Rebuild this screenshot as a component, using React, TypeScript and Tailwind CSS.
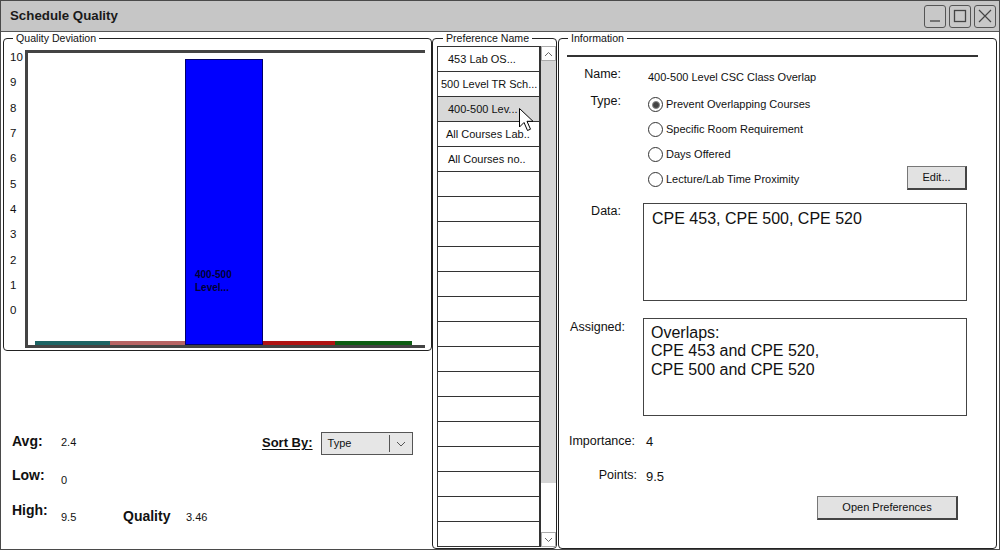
import React from "react";

const prefRows: { text: string; pad: string; selected?: boolean }[] = [
  { text: "453 Lab OS...", pad: "pl-[10px]" },
  { text: "500 Level TR Sch...", pad: "pl-[3px]" },
  { text: "400-500 Lev...", pad: "pl-[10px]", selected: true },
  { text: "All Courses Lab..", pad: "pl-[8px]" },
  { text: "All Courses no..", pad: "pl-[10px]" },
];

const yLabels = ["10", "9", "8", "7", "6", "5", "4", "3", "2", "1", "0"];

function Radio({ checked, label }: { checked?: boolean; label: string }) {
  return (
    <div className="flex h-[25px] items-center">
      <div className="flex h-[15px] w-[15px] items-center justify-center rounded-full border border-[#333] bg-white">
        {checked && <div className="h-[8px] w-[8px] rounded-full border border-[#888] bg-[#444]" />}
      </div>
      <span className="ml-[3px] text-[11px] leading-[13px] text-[#111]">{label}</span>
    </div>
  );
}

function WinButton({ children }: { children: React.ReactNode }) {
  return (
    <div className="flex h-[23px] w-[22px] items-center justify-center rounded-[3px] border border-[#555] bg-[#c8c8c8]">
      {children}
    </div>
  );
}

export default function App() {
  return (
    <div className="box-border flex h-[550px] w-[1000px] flex-col overflow-hidden border border-[#4a4a4a] bg-white font-['Liberation_Sans',Arial,sans-serif] text-[#111]">
      {/* Title bar */}
      <div className="flex h-[31px] shrink-0 items-center border-b border-[#555] bg-[#c6c6c6] pl-[9px] pr-[3px]">
        <span className="text-[13.3px] font-bold leading-[16px] text-[#1a1a1a]">Schedule Quality</span>
        <div className="ml-auto flex gap-[3px]">
          <WinButton>
            <svg width="14" height="14" viewBox="0 0 14 14">
              <line x1="2" y1="12" x2="12" y2="12" stroke="#444" strokeWidth="1.3" />
            </svg>
          </WinButton>
          <WinButton>
            <svg width="14" height="14" viewBox="0 0 14 14">
              <rect x="1.5" y="1.5" width="11" height="11" fill="none" stroke="#444" strokeWidth="1.3" />
            </svg>
          </WinButton>
          <WinButton>
            <svg width="16" height="16" viewBox="0 0 16 16">
              <path d="M2 2 L14 14 M14 2 L2 14" stroke="#444" strokeWidth="1.2" />
            </svg>
          </WinButton>
        </div>
      </div>

      {/* Body */}
      <div className="flex min-h-0 flex-1">
        {/* Left column */}
        <div className="ml-[2px] flex w-[429px] flex-col">
          <fieldset className="m-0 h-[319px] rounded-[4px] border border-[#222] p-0">
            <legend className="ml-[9px] px-[3px] text-[10.6px] leading-[13px] text-[#111]">Quality Deviation</legend>
            <div className="flex">
              <div className="flex w-[21px] flex-col pl-[6px]">
                {yLabels.map((l) => (
                  <div key={l} className="flex h-[25.3px] items-center text-[11.5px] leading-[13px] text-[#111]">
                    {l}
                  </div>
                ))}
              </div>
              <div className="mt-[5px] h-[298px] w-[400px] border-b-[3px] border-l-[3px] border-t-[3px] border-[#444]">
                <div className="flex h-full items-end pl-[7px]">
                  <div className="h-[4px] w-[75px] bg-[#1d6464]" />
                  <div className="h-[4px] w-[75px] bg-[#b86464]" />
                  <div className="h-[286px] w-[78px] border border-[#00006a] bg-[#0000ff] pl-[9px] pt-[208px]">
                    <div className="text-[10px] font-bold leading-[13px] text-[#000033]">
                      400-500
                      <br />
                      Level...
                    </div>
                  </div>
                  <div className="h-[4px] w-[72px] bg-[#b01414]" />
                  <div className="h-[4px] w-[77px] bg-[#0e5e14]" />
                </div>
              </div>
            </div>
          </fieldset>

          {/* Stats */}
          <div className="flex flex-col pl-[9px] pt-[81px]">
            <div className="flex h-[23px] items-start">
              <div className="flex w-[250px] items-start">
                <span className="mt-[1px] w-[49px] text-[14px] font-bold leading-[16px]">Avg:</span>
                <span className="mt-[4px] text-[11px] leading-[13px]">2.4</span>
              </div>
              <span className="mt-[3px] text-[13px] font-bold leading-[16px] underline underline-offset-[2px]">Sort By:</span>
              <div className="ml-[8px] flex h-[23px] w-[92px] items-center border border-[#555] bg-[#e6e6e6]">
                <span className="pl-[6px] text-[11px] leading-[13px]">Type</span>
                <div className="ml-auto h-[17px] w-px bg-[#555]" />
                <div className="flex w-[22px] items-center justify-center">
                  <svg width="10" height="6" viewBox="0 0 10 6">
                    <path d="M1 1 L5 5 L9 1" fill="none" stroke="#555" strokeWidth="1" />
                  </svg>
                </div>
              </div>
            </div>
            <div className="mt-[11px] flex items-start">
              <span className="mt-[1px] w-[49px] text-[14px] font-bold leading-[16px]">Low:</span>
              <span className="mt-[8px] text-[11px] leading-[13px]">0</span>
            </div>
            <div className="mt-[14px] flex items-start">
              <span className="mt-[1px] w-[49px] text-[14px] font-bold leading-[16px]">High:</span>
              <span className="mt-[10px] w-[62px] text-[11px] leading-[13px]">9.5</span>
              <span className="mt-[7px] w-[63px] text-[14px] font-bold leading-[16px]">Quality</span>
              <span className="mt-[10px] text-[11px] leading-[13px]">3.46</span>
            </div>
          </div>
        </div>

        {/* Middle column */}
        <fieldset className="m-0 h-full w-[125px] rounded-[4px] border border-[#222] p-0">
          <legend className="ml-[10px] px-[3px] text-[10.6px] leading-[13px] text-[#111]">Preference Name</legend>
          <div className="relative ml-[4px] mt-[1px] flex h-[501px]">
            <div className="flex w-[102px] flex-col border-l border-t border-[#333]">
              {Array.from({ length: 20 }).map((_, i) => {
                const r = prefRows[i];
                return (
                  <div
                    key={i}
                    className={`flex h-[25px] shrink-0 items-center whitespace-nowrap border-b border-[#333] text-[11px] leading-[13px] ${
                      r?.selected ? "bg-[#d8d8d8]" : "bg-white"
                    } ${r ? r.pad : ""}`}
                  >
                    {r?.text}
                  </div>
                );
              })}
            </div>
            <div className="flex w-[17px] flex-col border-l-2 border-[#333] bg-white">
              <div className="flex h-[15px] shrink-0 items-center justify-center border border-[#aaa] bg-white">
                <svg width="9" height="6" viewBox="0 0 9 6">
                  <path d="M1 5 L4.5 1.5 L8 5" fill="none" stroke="#666" strokeWidth="1" />
                </svg>
              </div>
              <div className="h-[422px] shrink-0 bg-[#d4d4d4]" />
              <div className="flex-1" />
              <div className="flex h-[15px] shrink-0 items-center justify-center border border-[#aaa] bg-white">
                <svg width="9" height="6" viewBox="0 0 9 6">
                  <path d="M1 1 L4.5 4.5 L8 1" fill="none" stroke="#666" strokeWidth="1" />
                </svg>
              </div>
            </div>
            {/* mouse cursor */}
            <svg className="absolute left-[81px] top-[61px]" width="16" height="26" viewBox="0 0 16 26">
              <path
                d="M1.5 1.5 L1.5 20 L6 15.5 L9.5 23.5 L12.5 22.2 L9 14.3 L15 14.3 Z"
                fill="#fff"
                stroke="#000"
                strokeWidth="1"
                strokeLinejoin="miter"
              />
            </svg>
          </div>
        </fieldset>

        {/* Right column */}
        <fieldset className="m-0 ml-[1px] h-full w-[439px] rounded-[4px] border border-[#222] p-0">
          <legend className="ml-[9px] px-[3px] text-[10.6px] leading-[13px] text-[#111]">Information</legend>
          <div className="flex flex-col">
            <div className="ml-[8px] mt-[10px] h-[2px] w-[411px] bg-[#333]" />

            {/* Name */}
            <div className="mt-[10px] flex h-[14px] items-start">
              <span className="w-[62px] text-right text-[12.5px] leading-[14px]">Name:</span>
              <span className="ml-[27px] mt-[4px] text-[11px] leading-[13px]">400-500 Level CSC Class Overlap</span>
            </div>

            {/* Type */}
            <div className="mt-[11px] flex h-[100px] items-start">
              <span className="mt-[2px] w-[62px] text-right text-[12.5px] leading-[14px]">Type:</span>
              <div className="ml-[27px] flex flex-col">
                <Radio checked label="Prevent Overlapping Courses" />
                <Radio label="Specific Room Requirement" />
                <Radio label="Days Offered" />
                <Radio label="Lecture/Lab Time Proximity" />
              </div>
              <button className="mb-[2px] ml-auto mr-[29px] flex h-[24px] w-[60px] items-center justify-center self-end border border-[#777] border-b-2 border-r-2 border-b-[#444] border-r-[#444] bg-[#e2e2e2] text-[11px] leading-[13px] text-[#111]">
                Edit...
              </button>
            </div>

            {/* Data */}
            <div className="mt-[11px] flex items-start">
              <span className="mt-[1px] w-[62px] text-right text-[12.5px] leading-[14px]">Data:</span>
              <div className="ml-[22px] h-[98px] w-[324px] border border-[#444] pl-[8px] pt-[6px] text-[16px] leading-[18px]">
                CPE 453, CPE 500, CPE 520
              </div>
            </div>

            {/* Assigned */}
            <div className="mt-[17px] flex items-start">
              <span className="mt-[2px] w-[66px] text-right text-[12.5px] leading-[14px]">Assigned:</span>
              <div className="ml-[18px] h-[98px] w-[324px] border border-[#444] pl-[7px] pt-[5px] text-[16px] leading-[18.3px]">
                Overlaps:
                <br />
                CPE 453 and CPE 520,
                <br />
                CPE 500 and CPE 520
              </div>
            </div>

            {/* Importance */}
            <div className="mt-[18px] flex items-start">
              <span className="w-[76px] text-right text-[12.5px] leading-[14px]">Importance:</span>
              <span className="ml-[11px] text-[13px] leading-[15px]">4</span>
            </div>

            {/* Points */}
            <div className="mt-[19px] flex items-start">
              <span className="w-[78px] text-right text-[12.5px] leading-[14px]">Points:</span>
              <span className="ml-[9px] mt-[1px] text-[13px] leading-[15px]">9.5</span>
            </div>

            <button className="ml-[258px] mt-[12px] flex h-[24px] w-[141px] items-center justify-center border border-[#777] border-b-2 border-r-2 border-b-[#444] border-r-[#444] bg-[#e2e2e2] text-[11px] leading-[13px] text-[#111]">
              Open Preferences
            </button>
          </div>
        </fieldset>
      </div>
    </div>
  );
}
